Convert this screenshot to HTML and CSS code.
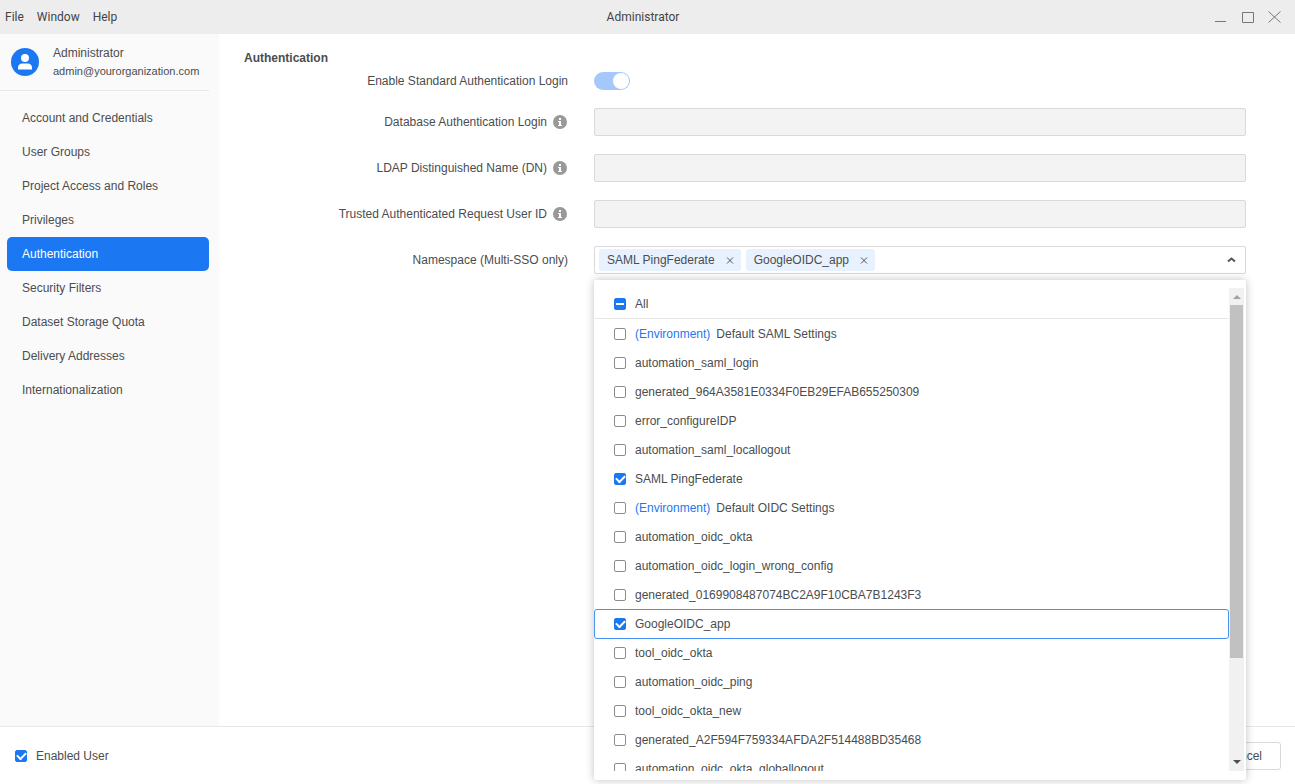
FILE: index.html
```html
<!DOCTYPE html>
<html lang="en">
<head>
    <meta charset="UTF-8">
    <meta name="viewport" content="width=device-width, initial-scale=1.0">
    <title>Administrator</title>
    <link rel="stylesheet" href="styles.css">
</head>
<body>
    <header class="titlebar">
        <nav class="menu">
            <button type="button">File</button>
            <button type="button">Window</button>
            <button type="button">Help</button>
        </nav>
        <div class="title">Administrator</div>
        <div class="window-controls">
            <button type="button" aria-label="Minimize"><svg width="13" height="13" viewBox="0 0 13 13"><path d="M1 10.500h11"/></svg></button>
            <button type="button" aria-label="Maximize"><svg width="13" height="13" viewBox="0 0 13 13"><path d="M1.500 1.500h11v10h-11z"/></svg></button>
            <button type="button" aria-label="Close"><svg width="13" height="13" viewBox="0 0 13 13"><path d="M0.500 0.500l12 11M12.500 0.500l-12 11"/></svg></button>
        </div>
    </header>

    <div class="workspace">
        <aside class="sidebar">
            <div class="profile">
                <svg class="avatar" width="28" height="28" viewBox="0 0 28 28">
                    <circle cx="14" cy="14" r="14" fill="#1c77f3"/>
                    <circle cx="14" cy="10" r="4" fill="#fff"/>
                    <path d="M7 21.500v-1.500q0-4.500 4.500-4.500h5q4.500 0 4.500 4.500v1.500z" fill="#fff"/>
                </svg>
                <div class="profile-text">
                    <div>Administrator</div>
                    <div class="email">admin@yourorganization.com</div>
                </div>
            </div>
            <nav class="nav">
                <a href="#">Account and Credentials</a>
                <a href="#">User Groups</a>
                <a href="#">Project Access and Roles</a>
                <a href="#">Privileges</a>
                <a href="#" class="active">Authentication</a>
                <a href="#">Security Filters</a>
                <a href="#">Dataset Storage Quota</a>
                <a href="#">Delivery Addresses</a>
                <a href="#">Internationalization</a>
            </nav>
        </aside>

        <main class="content">
            <h1>Authentication</h1>
            <form class="form">
                <div class="form-row">
                    <label for="standard-login">Enable Standard Authentication Login</label>
                    <input type="checkbox" role="switch" id="standard-login" class="switch" checked disabled>
                </div>
                <div class="form-row">
                    <div class="label-cell">
                        <label for="db-login">Database Authentication Login</label>
                        <svg class="info" width="14" height="14" viewBox="0 0 14 14"><circle cx="7" cy="7" r="7"/><path d="M6 3h2v2H6zM5 6h3v4h1v1H5v-1h1V7H5z"/></svg>
                    </div>
                    <input type="text" id="db-login" class="text-input" disabled>
                </div>
                <div class="form-row">
                    <div class="label-cell">
                        <label for="ldap-dn">LDAP Distinguished Name (DN)</label>
                        <svg class="info" width="14" height="14" viewBox="0 0 14 14"><circle cx="7" cy="7" r="7"/><path d="M6 3h2v2H6zM5 6h3v4h1v1H5v-1h1V7H5z"/></svg>
                    </div>
                    <input type="text" id="ldap-dn" class="text-input" disabled>
                </div>
                <div class="form-row">
                    <div class="label-cell">
                        <label for="trusted-id">Trusted Authenticated Request User ID</label>
                        <svg class="info" width="14" height="14" viewBox="0 0 14 14"><circle cx="7" cy="7" r="7"/><path d="M6 3h2v2H6zM5 6h3v4h1v1H5v-1h1V7H5z"/></svg>
                    </div>
                    <input type="text" id="trusted-id" class="text-input" disabled>
                </div>
                <div class="form-row">
                    <label for="namespace-toggle">Namespace (Multi-SSO only)</label>
                    <div class="multiselect">
                        <div class="select-box">
                            <span class="tag">SAML PingFederate
                                <button type="button" aria-label="Remove SAML PingFederate"><svg width="8" height="8" viewBox="0 0 8 8"><path d="M1 1.500l6 6M7 1.500l-6 6"/></svg></button>
                            </span>
                            <span class="tag">GoogleOIDC_app
                                <button type="button" aria-label="Remove GoogleOIDC_app"><svg width="8" height="8" viewBox="0 0 8 8"><path d="M1 1.500l6 6M7 1.500l-6 6"/></svg></button>
                            </span>
                            <button type="button" id="namespace-toggle" class="toggle" aria-expanded="true"><svg width="9" height="6" viewBox="0 0 9 6"><path d="M1 4.500l3.500-3 3.500 3"/></svg></button>
                        </div>

                        <div class="dropdown">
                            <div class="options">
                                <label class="option option-all"><input type="checkbox" class="partial">All</label>
                                <label class="option"><input type="checkbox"><span class="env">(Environment)</span>Default SAML Settings</label>
                                <label class="option"><input type="checkbox">automation_saml_login</label>
                                <label class="option"><input type="checkbox">generated_964A3581E0334F0EB29EFAB655250309</label>
                                <label class="option"><input type="checkbox">error_configureIDP</label>
                                <label class="option"><input type="checkbox">automation_saml_locallogout</label>
                                <label class="option"><input type="checkbox" checked>SAML PingFederate</label>
                                <label class="option"><input type="checkbox"><span class="env">(Environment)</span>Default OIDC Settings</label>
                                <label class="option"><input type="checkbox">automation_oidc_okta</label>
                                <label class="option"><input type="checkbox">automation_oidc_login_wrong_config</label>
                                <label class="option"><input type="checkbox">generated_0169908487074BC2A9F10CBA7B1243F3</label>
                                <label class="option focused"><input type="checkbox" checked>GoogleOIDC_app</label>
                                <label class="option"><input type="checkbox">tool_oidc_okta</label>
                                <label class="option"><input type="checkbox">automation_oidc_ping</label>
                                <label class="option"><input type="checkbox">tool_oidc_okta_new</label>
                                <label class="option"><input type="checkbox">generated_A2F594F759334AFDA2F514488BD35468</label>
                                <label class="option"><input type="checkbox">automation_oidc_okta_globallogout</label>
                            </div>
                            <div class="scrollbar">
                                <svg width="8" height="4" viewBox="0 0 8 4"><path d="M0 4l4-4 4 4z" fill="#a3a3a3"/></svg>
                                <div class="track"><div class="thumb"></div></div>
                                <svg width="8" height="4" viewBox="0 0 8 4"><path d="M0 0l4 4 4-4z" fill="#505050"/></svg>
                            </div>
                        </div>
                    </div>
                </div>
            </form>
        </main>
    </div>

    <footer class="footer">
        <label class="enabled-user"><input type="checkbox" checked>Enabled User</label>
        <button type="button" class="cancel">Cancel</button>
    </footer>
</body>
</html>
```
FILE: styles.css
```css
* { margin: 0; padding: 0; box-sizing: border-box; }
body {
    font: 12px/20px "Liberation Sans", Arial, sans-serif;
    color: #4a4d50;
    background: #fff;
    height: 100vh;
    display: flex;
    flex-direction: column;
    overflow: hidden;
}
button {
    font: inherit;
    color: inherit;
    background: none;
    border: none;
}
svg { display: block; }

/* title bar */
.titlebar {
    display: grid;
    grid-template-columns: 1fr auto 1fr;
    align-items: center;
    height: 34px;
    flex: none;
    padding: 0 14px 0 5px;
    background: #ededed;
    color: #444;
    font-family: Roboto, "Segoe UI", sans-serif;
}
.menu {
    display: flex;
    gap: 13px;
}
.window-controls {
    display: flex;
    justify-content: flex-end;
    gap: 14px;
}
.window-controls svg {
    fill: none;
    stroke: #777;
}

.workspace {
    display: flex;
    flex: 1;
    min-height: 0;
}

/* sidebar */
.sidebar {
    width: 219px;
    flex: none;
    padding: 0 10px 0 0;
    background: #fafafa;
}
.profile {
    display: flex;
    align-items: center;
    gap: 14px;
    height: 57px;
    padding-left: 11px;
    border-bottom: 1px solid #e8e8e8;
}
.profile-text { line-height: 18px; }
.email { font-size: 11px; }
.nav {
    display: flex;
    flex-direction: column;
    padding: 10px 0 0 7px;
}
.nav a {
    padding: 7px 15px;
    border-radius: 5px;
    color: inherit;
    text-decoration: none;
}
.nav a.active {
    background: #1c77f3;
    color: #fff;
}

/* form */
.content {
    flex: 1;
    padding: 14px 49px 0 25px;
}
.content h1 {
    font-size: 12px;
    line-height: 20px;
}
.form {
    display: flex;
    flex-direction: column;
    gap: 18px;
    padding-top: 4px;
}
.form-row {
    display: grid;
    grid-template-columns: 324px 1fr;
    column-gap: 26px;
    align-items: center;
}
.form-row > label { text-align: right; }
.form-row:first-child { line-height: 18px; }
.label-cell {
    display: flex;
    align-items: center;
    justify-content: flex-end;
    gap: 6px;
    padding-right: 1px;
}
.info circle { fill: #999; }
.info path { fill: #fff; }
.text-input {
    width: 100%;
    height: 28px;
    padding: 0 8px;
    border: 1px solid #d9d9d9;
    border-radius: 2px;
    background: #f3f3f3;
}
.switch {
    appearance: none;
    width: 36px;
    height: 18px;
    padding: 1px;
    border-radius: 9px;
    background: #a4c8fa;
    display: flex;
    justify-content: flex-end;
}
.switch::before {
    content: "";
    width: 16px;
    height: 16px;
    border-radius: 50%;
    background: #fff;
}

/* multi select */
.multiselect { position: relative; }
.select-box {
    display: flex;
    align-items: center;
    gap: 5px;
    height: 28px;
    padding: 0 9px 0 4px;
    border: 1px solid #d9d9d9;
    border-radius: 2px;
}
.tag {
    display: flex;
    align-items: center;
    gap: 11px;
    height: 22px;
    padding: 0 7px 0 8px;
    border-radius: 3px;
    background: #e8f2fe;
}
.tag svg, .toggle svg {
    fill: none;
    stroke: #555;
}
.toggle svg { stroke-width: 2; }
.toggle { margin-left: auto; }
.dropdown {
    position: absolute;
    top: 34px;
    left: 0;
    right: 0;
    z-index: 10;
    display: flex;
    height: 500px;
    padding: 8px 2px 9px 0;
    border-radius: 2px;
    background: #fff;
    box-shadow: 0 0 8px rgba(0,0,0,0.25);
}
.options {
    flex: 1;
    overflow: hidden;
}
.option {
    display: flex;
    align-items: center;
    height: 29px;
    padding: 0 19px;
    border: 1px solid transparent;
    border-radius: 3px;
}
.option-all {
    height: 31px;
    border-bottom-color: #e8e8e8;
    border-radius: 0;
}
.option.focused {
    height: 30px;
    margin-bottom: -1px;
    border-color: #4693f7;
}
.env {
    margin-right: 6px;
    color: #1c77f3;
}
.option input, .enabled-user input {
    appearance: none;
    width: 12px;
    height: 12px;
    flex: none;
    margin-right: 9px;
    border: 1px solid #8c8c8c;
    border-radius: 2px;
}
.option input:checked, .enabled-user input:checked, .option .partial {
    display: flex;
    align-items: center;
    justify-content: center;
    border-color: #1c77f3;
    background: #1c77f3;
}
.option input:checked::before, .enabled-user input:checked::before {
    content: "";
    width: 7px;
    height: 4px;
    margin-bottom: 2px;
    border: solid #fff;
    border-width: 0 0 2px 2px;
    transform: rotate(-45deg);
}
.option .partial::before {
    content: "";
    width: 8px;
    height: 2px;
    background: #fff;
}
.scrollbar {
    display: flex;
    flex-direction: column;
    align-items: center;
    width: 15px;
    padding: 7px 0;
    background: #f1f1f1;
}
.track {
    flex: 1;
    width: 13px;
    padding: 6px 0 8px;
}
.thumb {
    height: 79%;
    background: #c1c1c1;
}

/* footer */
.footer {
    display: flex;
    align-items: center;
    justify-content: space-between;
    height: 58px;
    flex: none;
    padding: 0 14px 0 15px;
    border-top: 1px solid #e8e8e8;
}
.enabled-user {
    display: flex;
    align-items: center;
}
.cancel {
    height: 28px;
    padding: 0 18px;
    border: 1px solid #d9d9d9;
    border-radius: 3px;
}
```
